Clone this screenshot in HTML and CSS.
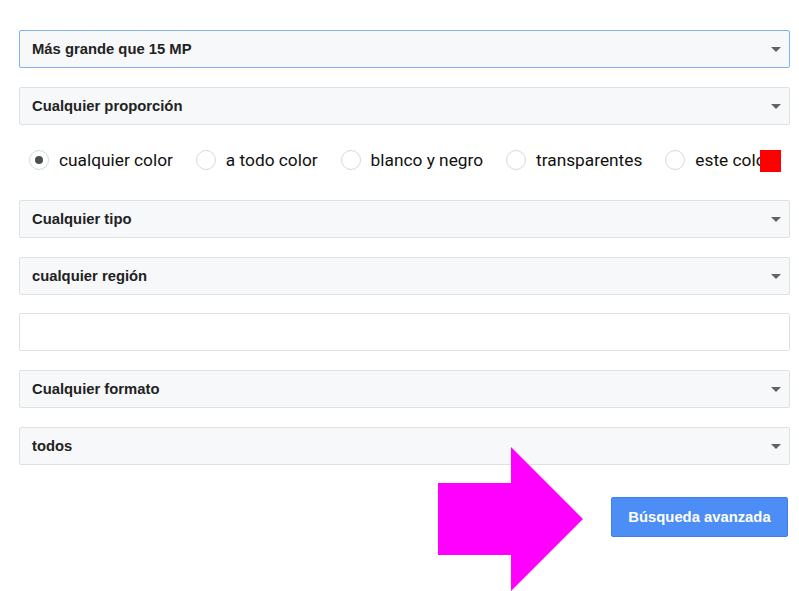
FILE: index.html
```html
<!DOCTYPE html>
<html lang="es">
<head>
    <meta charset="UTF-8">
    <title>Búsqueda avanzada</title>
    <link rel="stylesheet" href="styles.css">
</head>
<body>

    <div class="form">
        <div class="select active">Más grande que 15 MP</div>
        <div class="select">Cualquier proporción</div>

        <!-- Colour radios -->
        <div class="radios">
            <label class="radio checked"><span class="dot"></span>cualquier color</label>
            <label class="radio"><span class="dot"></span>a todo color</label>
            <label class="radio"><span class="dot"></span>blanco y negro</label>
            <label class="radio"><span class="dot"></span>transparentes</label>
            <label class="radio"><span class="dot"></span>este color</label>
            <span class="swatch"></span>
        </div>

        <div class="select">Cualquier tipo</div>
        <div class="select">cualquier región</div>
        <input class="field" type="text">
        <div class="select">Cualquier formato</div>
        <div class="select">todos</div>

        <div class="actions">
            <button class="search">Búsqueda avanzada</button>
        </div>
    </div>

    <!-- Pointer arrow -->
    <svg class="arrow" width="146" height="144" viewBox="0 0 146 144">
        <polygon points="0,36 73,36 73,0 145,72 73,144 73,108 0,108" fill="#ff00ff"/>
    </svg>

</body>
</html>
```

FILE: styles.css
```css
body {
    margin: 0;
    padding: 30px 0 0 19px;
    background: white;
    font-family: 'Liberation Sans', Arial, sans-serif;
}

.form {
    width: 771px;
    display: flex;
    flex-direction: column;
    gap: 19px;
}

.select {
    position: relative;
    height: 36px;
    line-height: 36px;
    padding-left: 12px;
    background: #f6f8f9;
    border: 1px solid #dde2e4;
    border-radius: 2px;
    font-size: 14.8px;
    font-weight: bold;
    color: #222;
}

.select.active {
    border-color: #7fb2f5;
}

.select::after {
    content: "";
    position: absolute;
    right: 8px;
    top: 16px;
    border-left: 5px solid transparent;
    border-right: 5px solid transparent;
    border-top: 5px solid #5f6368;
}

/* Radio row */
.radios {
    position: relative;
    height: 37px;
    display: flex;
    align-items: center;
    padding: 0 0 5px 10px;
    box-sizing: border-box;
    font-family: Roboto, sans-serif;
    font-size: 17.3px;
    color: #111;
}

.radio {
    display: flex;
    align-items: center;
    margin-right: 23px;
    white-space: nowrap;
}

.dot {
    width: 18px;
    height: 18px;
    border: 1px solid #d3dadb;
    border-radius: 50%;
    margin-right: 10px;
    display: flex;
    align-items: center;
    justify-content: center;
}

.checked .dot::after {
    content: "";
    width: 8px;
    height: 8px;
    border-radius: 50%;
    background: #4a4f52;
}

.swatch {
    position: absolute;
    left: 741px;
    top: 6px;
    width: 21px;
    height: 22px;
    background: #ff0000;
}

.field {
    height: 38px;
    margin: -1px 0 0;
    padding: 0;
    box-sizing: border-box;
    border: 1px solid #dde2e4;
    border-radius: 2px;
    background: white;
}

.actions {
    display: flex;
    justify-content: flex-end;
    margin-top: 13px;
    padding-right: 2px;
}

.search {
    width: 177px;
    height: 40px;
    background: #4d8ef6;
    border: 1px solid #3f7fe8;
    border-radius: 2px;
    color: white;
    font-family: 'Liberation Sans', Arial, sans-serif;
    font-size: 14.8px;
    font-weight: bold;
}

.arrow {
    position: absolute;
    left: 438px;
    top: 447px;
}
```
